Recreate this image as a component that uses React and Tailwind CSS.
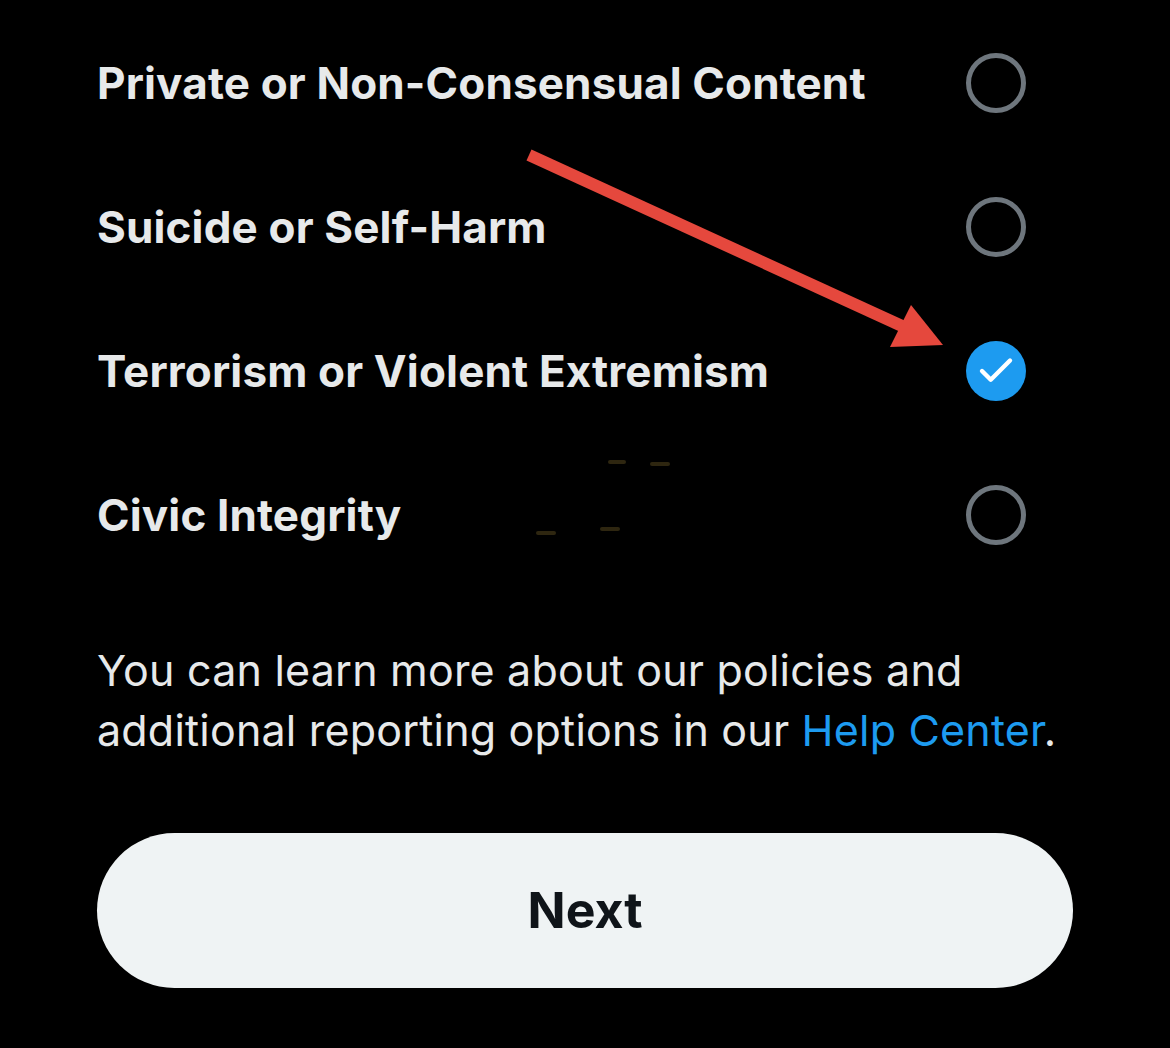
import { Check } from "lucide-react";

const options = [
    { label: "Private or Non-Consensual Content", checked: false },
    { label: "Suicide or Self-Harm", checked: false },
    { label: "Terrorism or Violent Extremism", checked: true },
    { label: "Civic Integrity", checked: false },
];

function Radio({ checked }) {
    if (checked) {
        return (
            <div className="flex items-center justify-center w-[60px] h-[60px] rounded-full bg-[#1d9bf0]">
                <Check className="w-[42px] h-[42px] text-white" strokeWidth={2.5} />
            </div>
        );
    }
    return <div className="w-[60px] h-[60px] rounded-full border-[5px] border-[#6e767d]" />;
}

export default function App() {
    return (
        <div
            className="relative w-[1170px] h-[1048px] bg-black overflow-hidden text-[#e7e9ea]"
            style={{ fontFamily: "Inter, 'Open Sans', sans-serif" }}
        >
            <div className="flex flex-col pt-[11px] pl-[97px] pr-[144px]">
                {options.map((opt) => (
                    <div key={opt.label} className="flex items-center justify-between h-[144px]">
                        <span className="text-[44px] font-bold tracking-[0.15px]">{opt.label}</span>
                        <Radio checked={opt.checked} />
                    </div>
                ))}
            </div>

            <p className="mt-[53px] pl-[97px] pr-[60px] text-[43px] leading-[60px] tracking-[0.2px]">
                You can learn more about our policies and additional reporting options in our{" "}
                <a className="text-[#1d9bf0]">Help Center</a>.
            </p>

            <div className="flex mt-[73px] px-[97px]">
                <button className="flex-1 h-[155px] rounded-full bg-[#eff3f4] text-[#0f1419] text-[50px] font-bold">
                    Next
                </button>
            </div>

            {/* red annotation arrow */}
            <svg className="absolute left-0 top-0" width="1170" height="1048">
                <line x1="529" y1="155" x2="902" y2="326" stroke="#e5483d" strokeWidth="12" />
                <polygon points="943,345 890,347 911,305" fill="#e5483d" />
            </svg>

            {/* faint screenshot artifacts */}
            <div className="absolute left-[608px] top-[460px] w-[18px] h-[4px] rounded bg-[#2e2610]" />
            <div className="absolute left-[650px] top-[462px] w-[20px] h-[4px] rounded bg-[#2e2610]" />
            <div className="absolute left-[536px] top-[531px] w-[20px] h-[4px] rounded bg-[#2e2610]" />
            <div className="absolute left-[600px] top-[527px] w-[20px] h-[4px] rounded bg-[#2e2610]" />
        </div>
    );
}
